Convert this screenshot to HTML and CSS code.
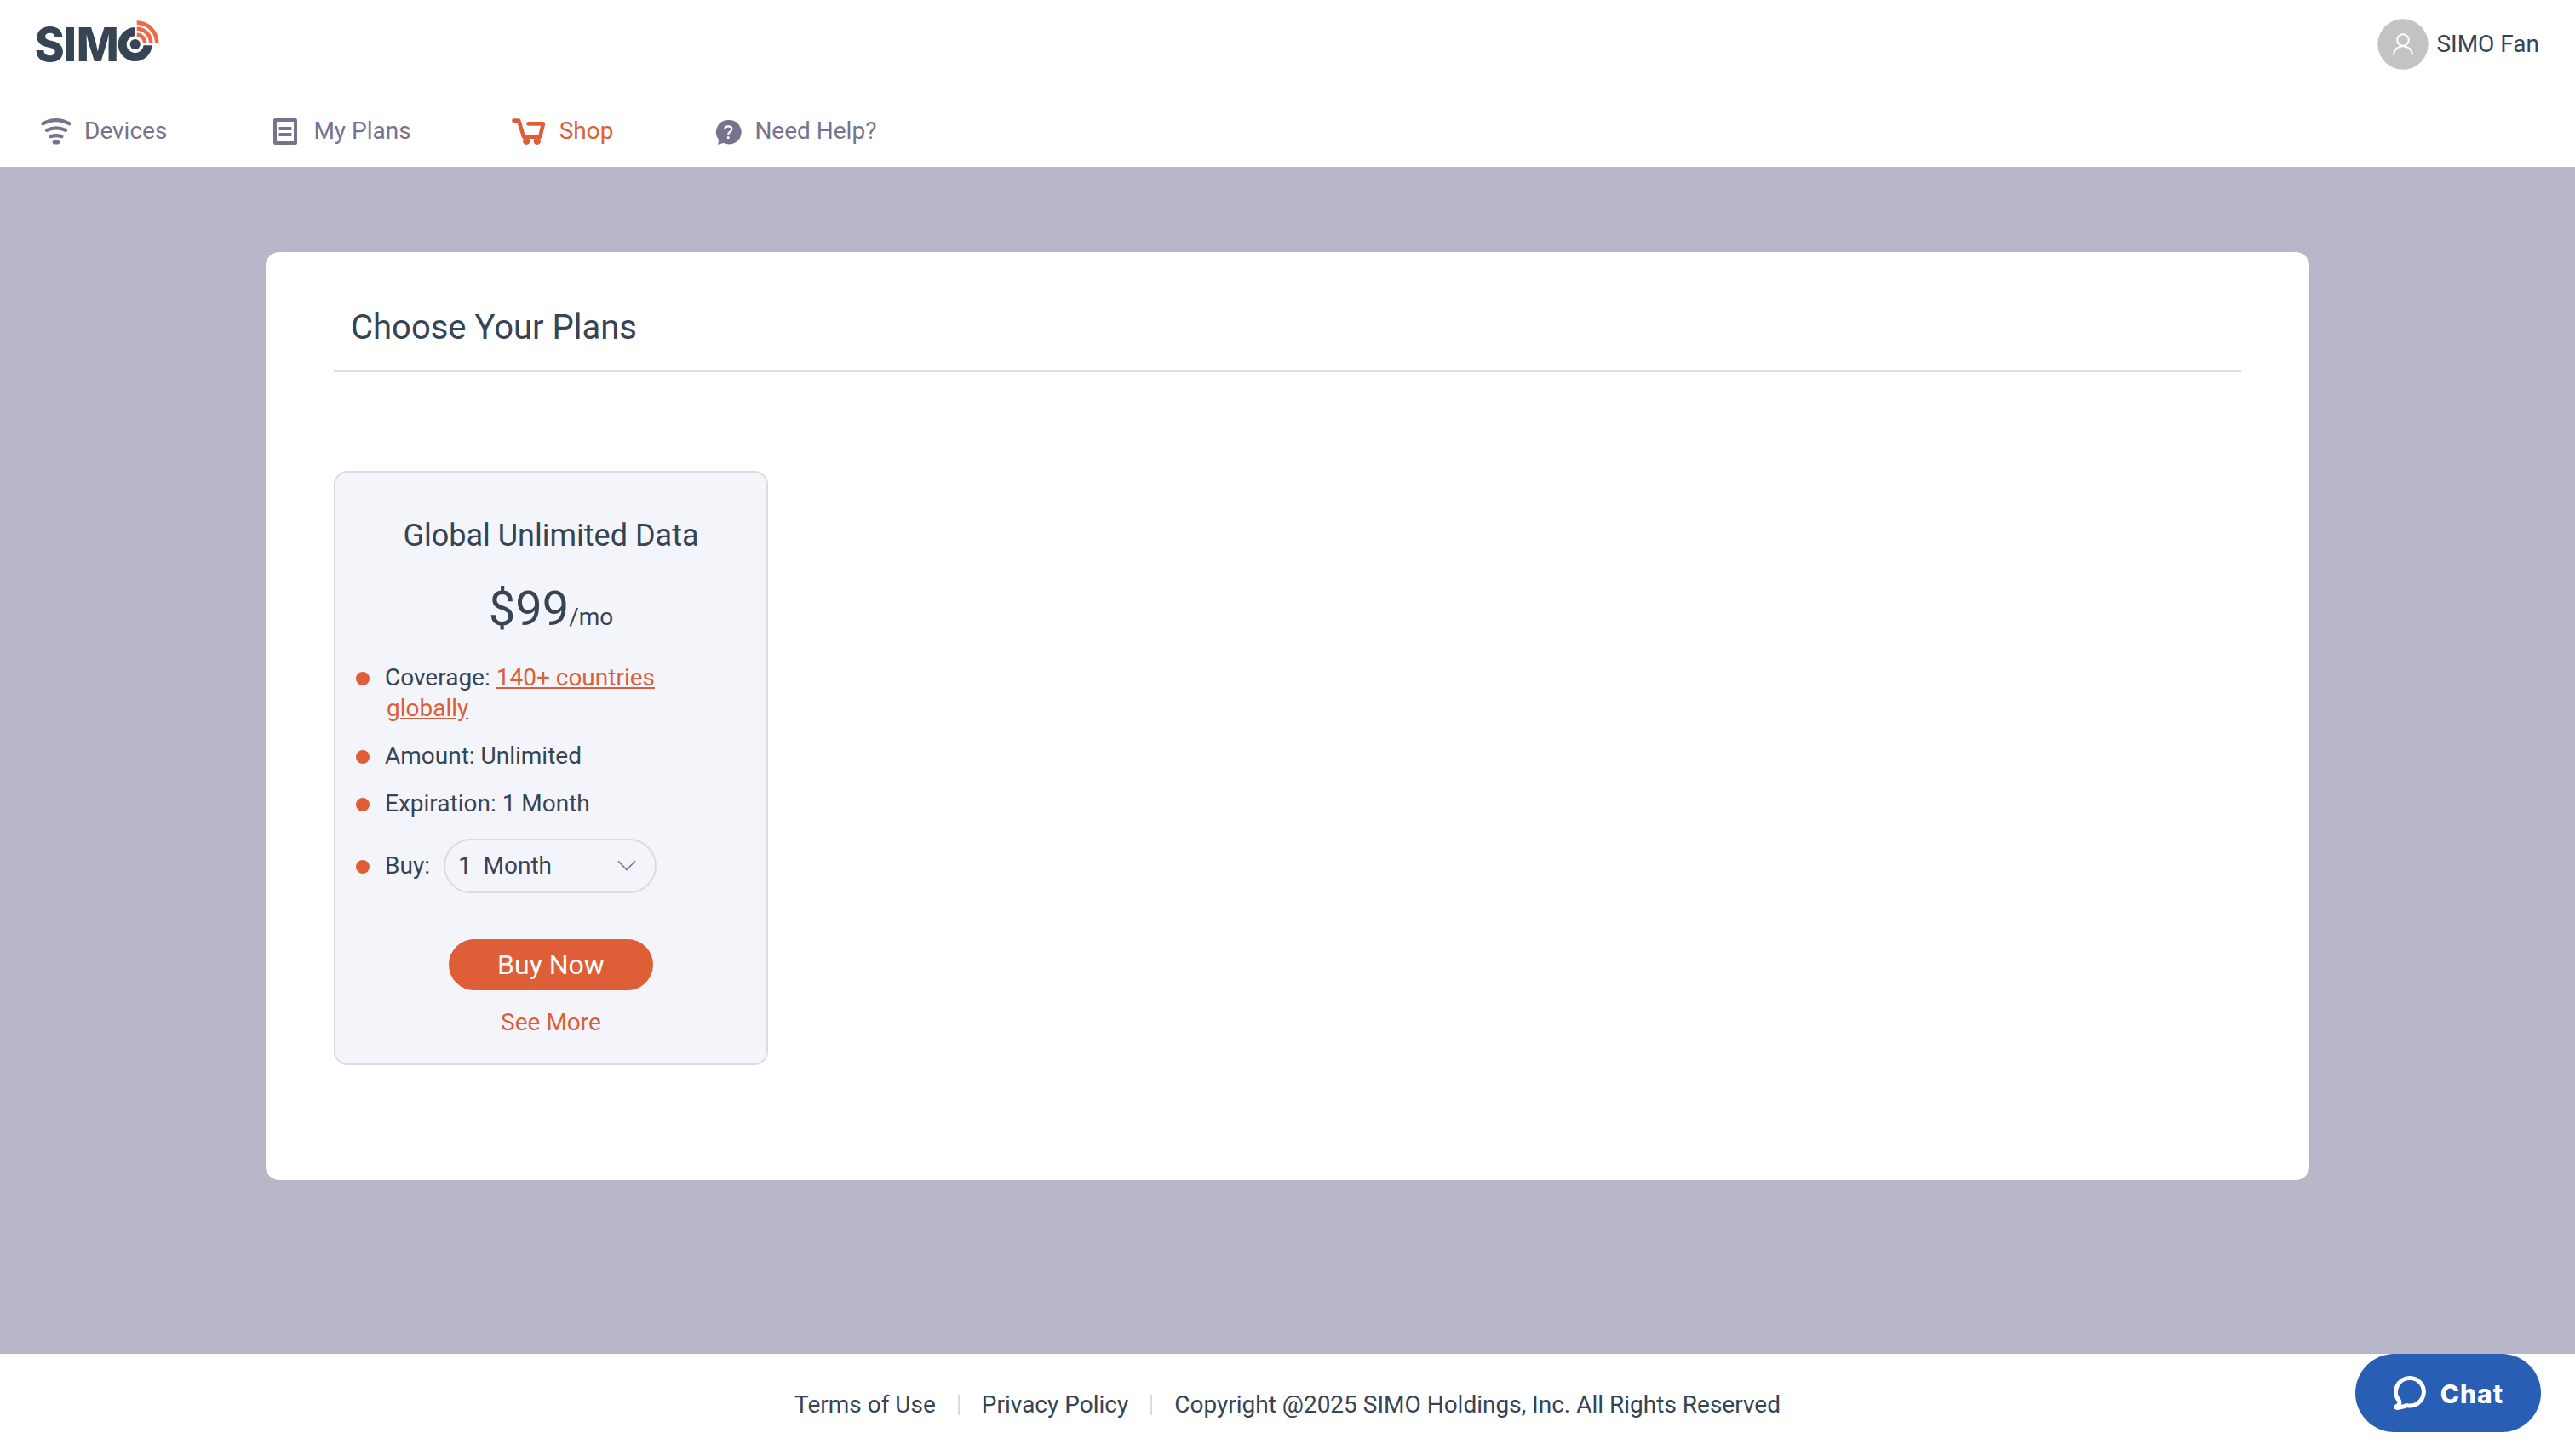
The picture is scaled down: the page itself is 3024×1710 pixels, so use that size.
FILE: index.html
```html
<!DOCTYPE html>
<html lang="en">
<head>
<meta charset="UTF-8">
<title>SIMO - Shop</title>
<link rel="stylesheet" href="styles.css">
</head>
<body>
	<header class="header">
		<div class="topBar">
			<svg class="logo" width="160" height="80" viewBox="38 8 160 80">
				<g class="logoText">
					<text x="40.7" y="71.7" textLength="35" lengthAdjust="spacingAndGlyphs">S</text>
					<text x="74.4" y="71.7">I</text>
					<text x="89.8" y="71.7" textLength="50" lengthAdjust="spacingAndGlyphs">M</text>
				</g>
				<path class="logoDark" d="M158 32.1A20 20 0 1 0 178.7 53.2H168.6A10 10 0 1 1 158 42.2Z"/>
				<circle class="logoDark" cx="158.7" cy="52" r="6.1"/>
				<path class="logoWave" d="M160.7 26.6A23.6 23.6 0 0 1 184.3 50.2M160.7 33.7A16.5 16.5 0 0 1 177.2 50.2M160.7 40.9A9.3 9.3 0 0 1 170 50.2"/>
			</svg>
			<div class="user">
				<svg width="60" height="60" viewBox="0 0 60 60">
					<circle cx="30" cy="30" r="29.7" fill="#c3c3c3"/>
					<g fill="none" stroke="#fff" stroke-width="2">
						<circle cx="30" cy="25" r="6.8"/>
						<path d="M19.2 42.7C19.2 28.8 40.8 28.8 40.8 42.7"/>
					</g>
				</svg>
				<span>SIMO Fan</span>
			</div>
		</div>
		<nav class="nav">
			<a class="navItem">
				<svg width="44" height="44" viewBox="0 0 44 44" fill="none" stroke="currentColor" stroke-width="4.2" stroke-linecap="round">
					<path d="M5.4 15.2Q21 7 36.2 15.2M10 22.8Q21 17.8 32 22.8M14.6 30.2Q21 28 27.4 30.2"/>
					<ellipse cx="21" cy="37" rx="4.4" ry="2.6" fill="currentColor" stroke="none"/>
				</svg>
				<span>Devices</span>
			</a>
			<a class="navItem navPlans">
				<svg width="44" height="44" viewBox="0 0 44 44" fill="none" stroke="currentColor" stroke-width="4">
					<rect x="10" y="11" width="24" height="27" stroke-linejoin="round"/>
					<path d="M14.6 21H29.4M14.6 28H29.4"/>
				</svg>
				<span>My Plans</span>
			</a>
			<a class="navItem navShop active">
				<svg width="44" height="44" viewBox="0 0 44 44" fill="none" stroke="currentColor" stroke-width="4.6" stroke-linecap="round" stroke-linejoin="round">
					<path d="M2.4 11.6H8.2L14 30.6H33.2L37 15.4H19.6"/>
					<circle cx="17.2" cy="35.8" r="4.1" fill="currentColor" stroke="none"/>
					<circle cx="29.8" cy="35.8" r="4.1" fill="currentColor" stroke="none"/>
				</svg>
				<span>Shop</span>
			</a>
			<a class="navItem navHelp">
				<svg width="44" height="44" viewBox="0 0 44 44">
					<path fill="currentColor" d="M23.4 11A14.3 14.3 0 1 1 18 38.1Q14.5 38.6 11 39.8Q11.8 37.4 12.2 34.4A14.3 14.3 0 0 1 23.4 11Z"/>
					<path d="M19.2 21.4Q19.6 18.3 23.3 18.3Q27.4 18.3 27.4 21.6Q27.4 23.4 25.2 24.8Q23.3 26 23.3 28" fill="none" stroke="#fff" stroke-width="2.3"/>
					<rect x="21.9" y="30.3" width="2.7" height="2.7" fill="#fff"/>
				</svg>
				<span>Need Help?</span>
			</a>
		</nav>
	</header>

	<main class="main">
		<section class="panel">
			<h1 class="panelTitle">Choose Your Plans</h1>
			<div class="card">
				<h2 class="cardTitle">Global Unlimited Data</h2>
				<div class="price">$99<span class="unit">/mo</span></div>
				<ul class="list">
					<li>Coverage: <a class="link">140+ countries globally</a></li>
					<li>Amount: Unlimited</li>
					<li>Expiration: 1 Month</li>
					<li class="buyRow">
						<span>Buy:</span>
						<div class="select">
							<span>1&nbsp; Month</span>
							<svg width="22" height="14" viewBox="0 0 22 14"><path d="M1 1.2L11 11.6L21 1.2" fill="none" stroke="#77738f" stroke-width="1.6"/></svg>
						</div>
					</li>
				</ul>
				<button class="btn">Buy Now</button>
				<a class="more">See More</a>
			</div>
		</section>
	</main>

	<footer class="footer">
		<a>Terms of Use</a>
		<i class="line"></i>
		<a>Privacy Policy</a>
		<i class="line"></i>
		<span>Copyright @2025 SIMO Holdings, Inc. All Rights Reserved</span>
	</footer>

	<button class="chat">
		<svg width="40" height="42" viewBox="0 0 40 42" fill="none" stroke="#fff" stroke-width="5" stroke-linejoin="round">
			<path d="M19.8 3.4A16.3 16.3 0 1 1 16.5 35.6Q11.5 37.6 5 38.4Q3 38.4 4.2 36.8Q9.5 34.4 7.6 30.4A16.3 16.3 0 0 1 19.8 3.4Z"/>
		</svg>
		<span>Chat</span>
	</button>
</body>
</html>
```

FILE: styles.css
```css
* { padding: 0; margin: 0; box-sizing: border-box; }
html, body { height: 100%; overflow: hidden; }
body { display: flex; flex-direction: column; font-family: Roboto, "Liberation Sans", sans-serif; font-size: 28px; line-height: 36px; color: #364454; background-color: #b8b6c9; }
svg { display: block; flex: none; }
h1, h2 { font-weight: 400; }
button { border: none; font-family: inherit; cursor: pointer; }

.header { height: 196px; background-color: white; }
.topBar { display: flex; justify-content: space-between; align-items: flex-start; height: 104px; padding: 8px 42px 0 38px; }
.logoText { font-family: Inter, sans-serif; font-weight: 800; font-size: 54.5px; fill: #364454; }
.logoDark { fill: #364454; }
.logoWave { fill: none; stroke: #ee6a47; stroke-width: 4.6; }
.user { display: flex; align-items: center; gap: 9px; margin-top: 14px; }
.nav { display: flex; padding: 26px 0 0 45px; }
.navItem { display: flex; align-items: center; gap: 10px; height: 44px; color: #77738f; }
.navItem span { padding-top: 3px; }
.navPlans { gap: 11px; margin-left: 117px; }
.navShop { gap: 12px; margin-left: 118px; }
.navHelp { margin-left: 112px; }
.active { color: #de5e38; }

.main { flex: 1; padding-top: 100px; }
.panel { width: 2400px; height: 1090px; margin: 0 auto; padding: 65px 80px 0; border-radius: 16px; background-color: white; }
.panelTitle { padding: 0 20px 26px; border-bottom: 2px solid #dcdce0; font-size: 40px; line-height: 48px; }
.card { display: flex; flex-direction: column; align-items: center; width: 510px; height: 698px; margin-top: 116px; padding: 50px 24px 0; border: 2px solid #dcdce0; border-radius: 16px; background-color: #f4f5fb; }
.cardTitle { font-size: 36px; line-height: 48px; }
.price { height: 64px; margin-top: 30px; font-size: 56px; line-height: 64px; }
.unit { font-size: 28px; line-height: 1; }

.list { display: flex; flex-direction: column; gap: 20px; width: 100%; margin-top: 31px; list-style: none; }
.list li { position: relative; padding: 0 90px 0 36px; text-indent: -2px; }
.list li::before { content: ""; position: absolute; left: 0; top: 11px; width: 16px; height: 16px; border-radius: 50%; background-color: #de5e38; }
.link { color: #de5e38; text-decoration: underline; }
.list .buyRow { display: flex; align-items: center; gap: 16px; margin-top: 3px; padding-right: 0; }
.list .buyRow::before { top: 25px; }
.select { display: flex; justify-content: space-between; align-items: center; width: 250px; height: 64px; padding: 0 22px 0 17px; border: 2px solid #dcdce0; border-radius: 32px; }

.btn { width: 240px; height: 60px; margin-top: 54px; border-radius: 30px; background-color: #de5e38; color: white; font-size: 32px; }
.more { margin-top: 20px; color: #de5e38; }

.footer { display: flex; justify-content: center; align-items: center; gap: 26px; height: 120px; background-color: white; }
.line { width: 2px; height: 24px; background-color: #dcdce0; }

.chat { position: fixed; right: 40px; bottom: 28px; display: flex; align-items: center; justify-content: center; gap: 16px; width: 218px; height: 92px; border-radius: 46px; background-color: #285eb4; color: white; font-family: Inter, sans-serif; font-size: 30px; font-weight: 800; letter-spacing: 1px; }
.chat span { padding-top: 2px; }
```
